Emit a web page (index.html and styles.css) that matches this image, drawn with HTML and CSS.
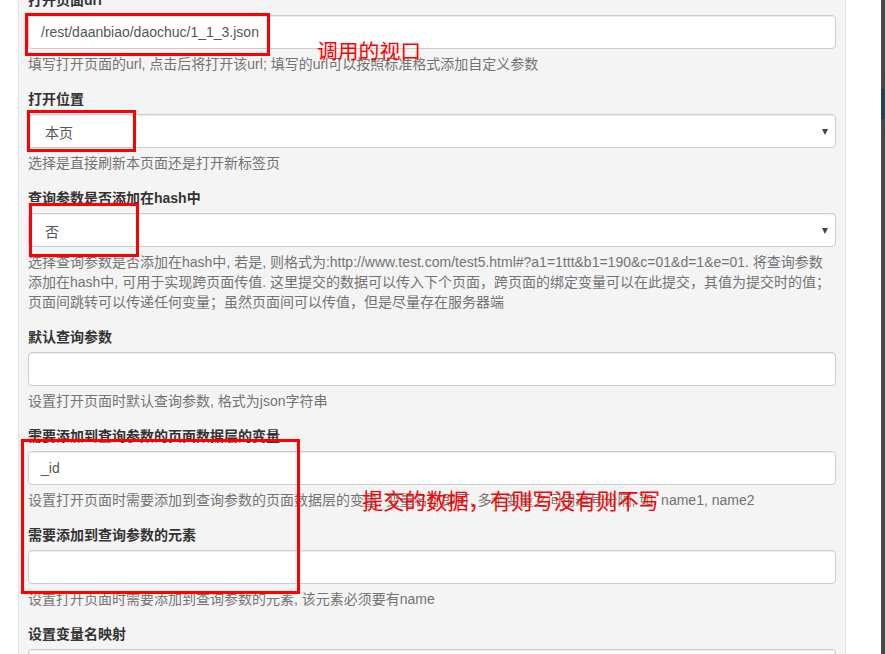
FILE: index.html
```html
<!DOCTYPE html>
<html lang="zh-CN">
<head>
<meta charset="utf-8">
<title>页面设置</title>
<link rel="stylesheet" href="styles.css">
</head>
<body>
<div class="page">
  <div class="panel">
    <div class="form-group">
      <label class="label">打开页面url</label>
      <div class="form-control">/rest/daanbiao/daochuc/1_1_3.json</div>
      <div class="help">填写打开页面的url, 点击后将打开该url; 填写的url可以按照标准格式添加自定义参数</div>
    </div>
    <div class="form-group">
      <label class="label">打开位置</label>
      <div class="form-control select"><span>本页</span><span class="caret"></span></div>
      <div class="help">选择是直接刷新本页面还是打开新标签页</div>
    </div>
    <div class="form-group">
      <label class="label">查询参数是否添加在hash中</label>
      <div class="form-control select"><span>否</span><span class="caret"></span></div>
      <div class="help">
        <span class="line">选择查询参数是否添加在hash中, 若是, 则格式为:http://www.test.com/test5.html#?a1=1ttt&amp;b1=190&amp;c=01&amp;d=1&amp;e=01. 将查询参数</span>
        <span class="line">添加在hash中, 可用于实现跨页面传值. 这里提交的数据可以传入下个页面，跨页面的绑定变量可以在此提交，其值为提交时的值；</span>
        <span class="line">页面间跳转可以传递任何变量；虽然页面间可以传值，但是尽量存在服务器端</span>
      </div>
    </div>
    <div class="form-group">
      <label class="label">默认查询参数</label>
      <div class="form-control"></div>
      <div class="help">设置打开页面时默认查询参数, 格式为json字符串</div>
    </div>
    <div class="form-group">
      <label class="label">需要添加到查询参数的页面数据层的变量</label>
      <div class="form-control">_id</div>
      <div class="help">设置打开页面时需要添加到查询参数的页面数据层的变量, 变量名称即可, 多个变量之间用逗号分隔, 如: name1, name2</div>
    </div>
    <div class="form-group">
      <label class="label">需要添加到查询参数的元素</label>
      <div class="form-control"></div>
      <div class="help">设置打开页面时需要添加到查询参数的元素, 该元素必须要有name</div>
    </div>
    <div class="form-group">
      <label class="label">设置变量名映射</label>
      <div class="form-control"></div>
    </div>
  </div>
  <div class="gap"></div>
  <div class="edge">
    <div class="edge-band"></div>
  </div>
</div>

<div class="mark mark-1"></div>
<div class="mark mark-2"></div>
<div class="mark mark-3"></div>
<div class="mark mark-4"></div>
<div class="note note-1">调用的视口</div>
<div class="note note-2">提交的数据，有则写没有则不写</div>
</body>
</html>
```

FILE: styles.css
```css
html, body {
  margin: 0;
  padding: 0;
  height: 100%;
  overflow: hidden;
  background: #ffffff;
}

body {
  font-family: "Liberation Sans", "Noto Sans CJK SC", Arial, sans-serif;
  font-size: 14px;
  line-height: 20px;
  color: #333333;
  position: relative;
}

.page {
  display: flex;
  align-items: stretch;
  height: 654px;
  padding-left: 18px;
}

.panel {
  width: 828px;
  box-sizing: border-box;
  background: #f4f4f4;
  border-left: 1px solid #e3e3e3;
  border-right: 1px solid #e3e3e3;
  padding: 0 9px;
  margin-top: -10px;
  height: 680px;
}

.gap {
  flex: 1;
}

.edge {
  width: 4px;
  background: #474747;
  display: flex;
  flex-direction: column;
  padding-top: 89px;
  box-sizing: border-box;
}

.edge-band {
  height: 30px;
  background: #2f3e4c;
}

.form-group {
  margin-bottom: 15px;
}

.label {
  display: block;
  font-weight: bold;
  margin-bottom: 5px;
  color: #333333;
}

.form-control {
  height: 34px;
  box-sizing: border-box;
  background: #ffffff;
  border: 1px solid #cccccc;
  border-radius: 4px;
  padding: 6px 12px;
  color: #555555;
  box-shadow: inset 0 1px 1px rgba(0, 0, 0, 0.075);
}

.select {
  display: flex;
  align-items: center;
  justify-content: space-between;
  padding-left: 16px;
  padding-right: 7px;
  padding-top: 8px;
  padding-bottom: 4px;
}

.caret {
  width: 0;
  height: 0;
  border-left: 3.5px solid transparent;
  border-right: 3.5px solid transparent;
  border-top: 6px solid #444444;
  margin-top: -2px;
}

.help {
  margin-top: 5px;
  color: #737373;
}

.line {
  display: block;
  white-space: nowrap;
}

.mark {
  position: absolute;
  box-sizing: border-box;
  border: 3px solid #ff0000;
}

.mark-1 { left: 25px; top: 13px; width: 245px; height: 43px; }
.mark-2 { left: 27px; top: 110px; width: 109px; height: 42px; }
.mark-3 { left: 29px; top: 203px; width: 110px; height: 54px; }
.mark-4 { left: 21px; top: 439px; width: 279px; height: 155px; }

.note {
  position: absolute;
  color: #ff0000;
  font-family: "Noto Sans CJK SC", sans-serif;
  line-height: 22px;
  white-space: nowrap;
}

.note-1 { left: 317px; top: 39px; font-size: 20.8px; }
.note-2 { left: 362px; top: 489px; font-size: 21.3px; }
```
